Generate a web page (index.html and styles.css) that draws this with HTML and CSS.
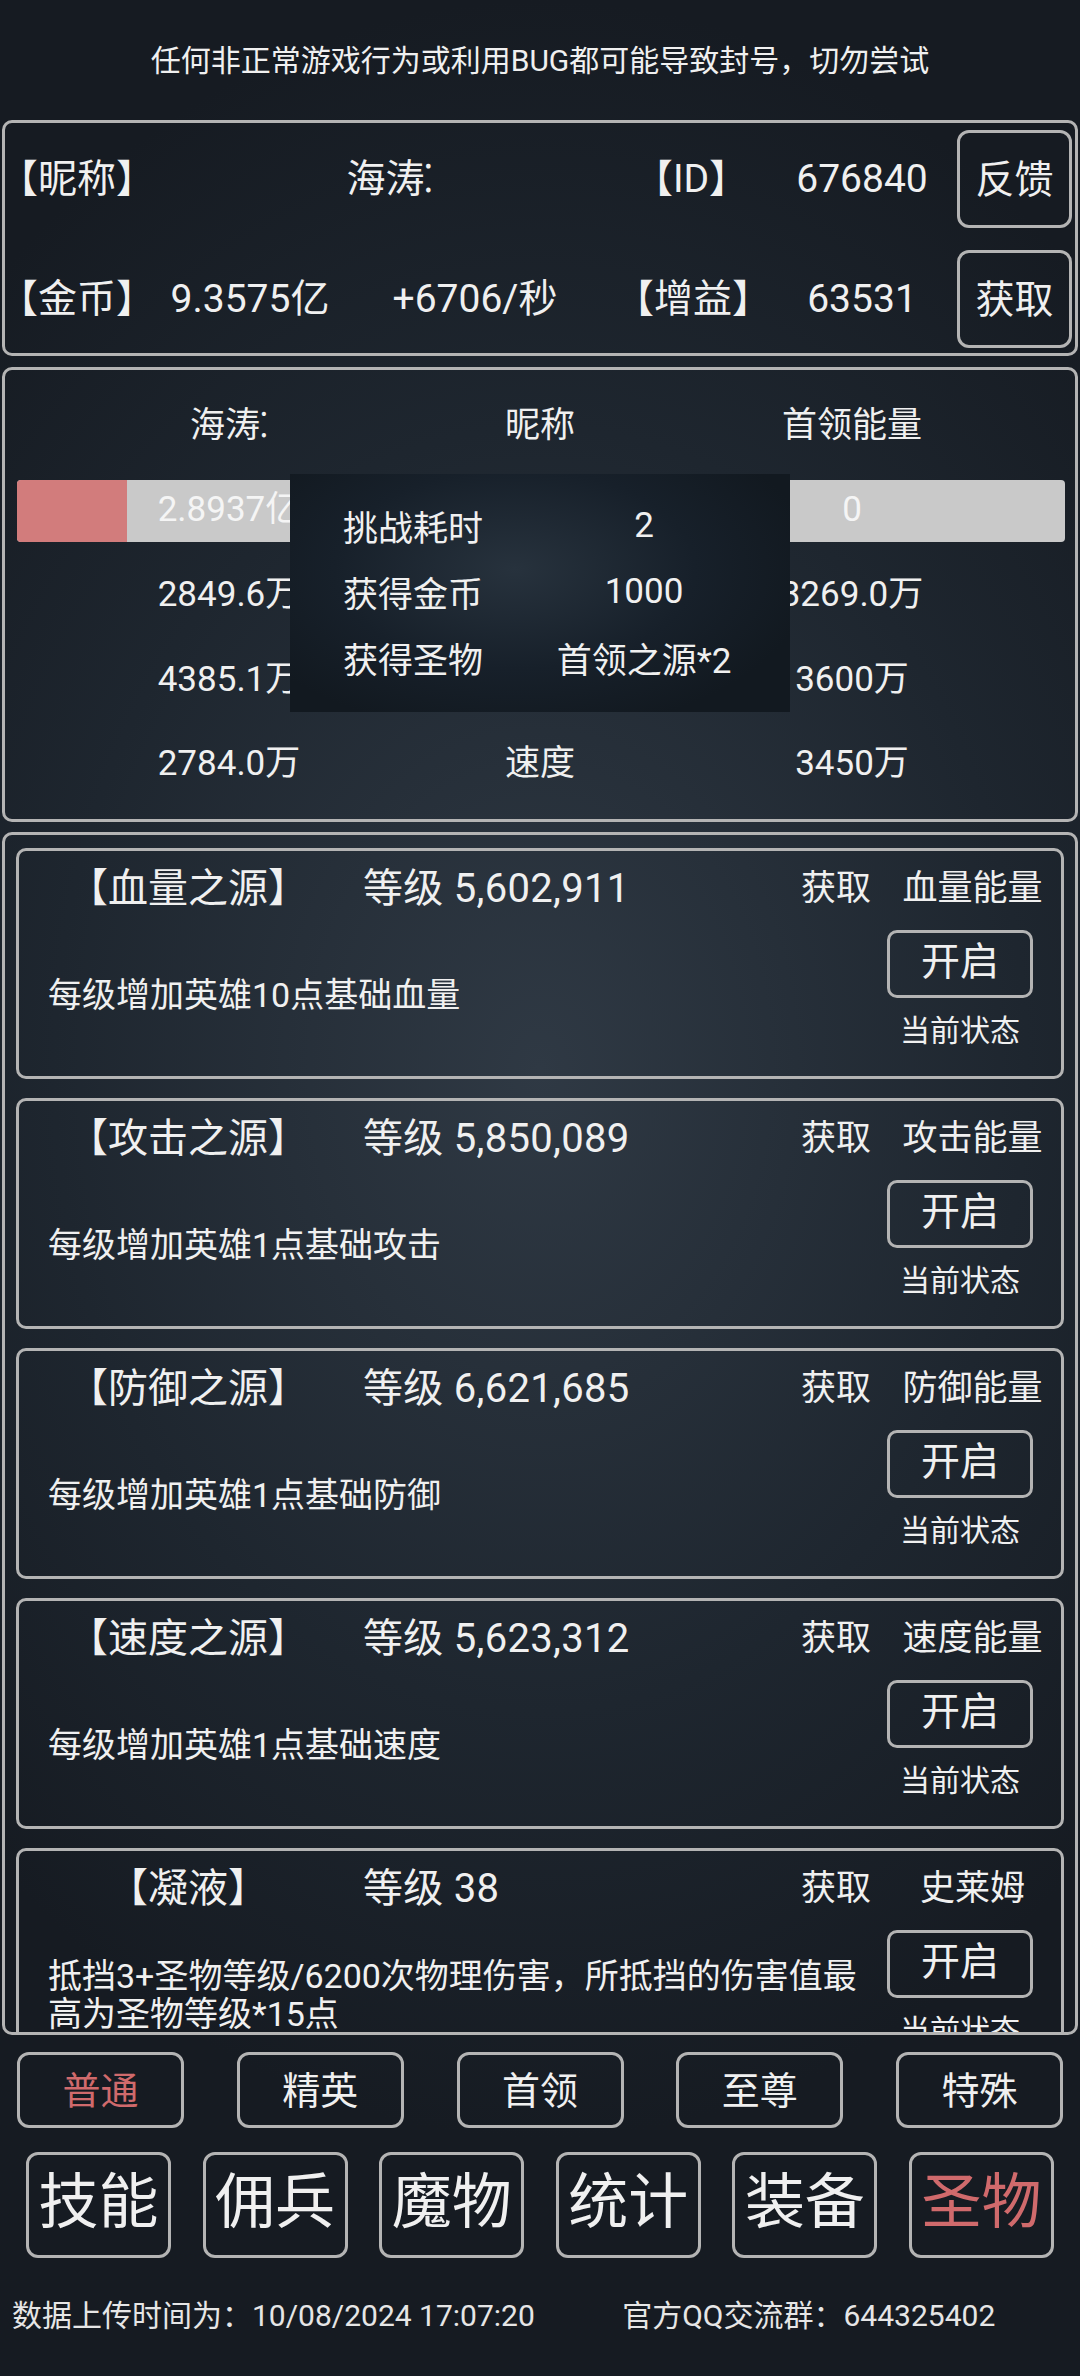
FILE: index.html
```html
<!DOCTYPE html>
<html lang="zh-CN">
<head>
    <meta charset="UTF-8">
    <meta name="viewport" content="width=device-width, initial-scale=1.0">
    <title>圣物</title>
    <link rel="stylesheet" href="styles.css">
</head>
<body>
    <div class="page">
        <p class="notice">任何非正常游戏行为或利用BUG都可能导致封号，切勿尝试</p>

        <section class="panel info">
            <span class="label">【昵称】</span>
            <span class="name">海涛⁚</span>
            <span class="mid">【ID】</span>
            <span class="val">676840</span>
            <button class="btn">反馈</button>

            <span class="label">【金币】</span>
            <span class="gold">9.3575亿</span>
            <span class="rate">+6706/秒</span>
            <span class="mid">【增益】</span>
            <span class="val">63531</span>
            <button class="btn">获取</button>
        </section>

        <section class="panel boss">
            <div class="boss-grid">
                <span>海涛⁚</span><span>昵称</span><span>首领能量</span>

                <div class="bar"><div class="bar-fill" style="width:26%"></div><span class="bar-text">2.8937亿</span></div>
                <span></span>
                <div class="bar"><div class="bar-fill" style="width:0%"></div><span class="bar-text">0</span></div>

                <span>2849.6万</span><span></span><span>3269.0万</span>
                <span>4385.1万</span><span></span><span>3600万</span>
                <span>2784.0万</span><span>速度</span><span>3450万</span>
            </div>

            <div class="result">
                <span>挑战耗时</span><span>2</span>
                <span>获得金币</span><span>1000</span>
                <span>获得圣物</span><span>首领之源*2</span>
            </div>
        </section>

        <section class="panel relics">
            <div class="relic">
                <div class="relic-head">
                    <span class="r-title">【血量之源】</span>
                    <span class="r-level">等级 5,602,911</span>
                    <span class="r-get">获取</span>
                    <span class="r-energy">血量能量</span>
                </div>
                <div class="relic-body">
                    <p class="r-desc">每级增加英雄10点基础血量</p>
                    <div class="r-side">
                        <button class="r-btn">开启</button>
                        <span class="r-state">当前状态</span>
                    </div>
                </div>
            </div>

            <div class="relic">
                <div class="relic-head">
                    <span class="r-title">【攻击之源】</span>
                    <span class="r-level">等级 5,850,089</span>
                    <span class="r-get">获取</span>
                    <span class="r-energy">攻击能量</span>
                </div>
                <div class="relic-body">
                    <p class="r-desc">每级增加英雄1点基础攻击</p>
                    <div class="r-side">
                        <button class="r-btn">开启</button>
                        <span class="r-state">当前状态</span>
                    </div>
                </div>
            </div>

            <div class="relic">
                <div class="relic-head">
                    <span class="r-title">【防御之源】</span>
                    <span class="r-level">等级 6,621,685</span>
                    <span class="r-get">获取</span>
                    <span class="r-energy">防御能量</span>
                </div>
                <div class="relic-body">
                    <p class="r-desc">每级增加英雄1点基础防御</p>
                    <div class="r-side">
                        <button class="r-btn">开启</button>
                        <span class="r-state">当前状态</span>
                    </div>
                </div>
            </div>

            <div class="relic">
                <div class="relic-head">
                    <span class="r-title">【速度之源】</span>
                    <span class="r-level">等级 5,623,312</span>
                    <span class="r-get">获取</span>
                    <span class="r-energy">速度能量</span>
                </div>
                <div class="relic-body">
                    <p class="r-desc">每级增加英雄1点基础速度</p>
                    <div class="r-side">
                        <button class="r-btn">开启</button>
                        <span class="r-state">当前状态</span>
                    </div>
                </div>
            </div>

            <div class="relic">
                <div class="relic-head">
                    <span class="r-title">【凝液】</span>
                    <span class="r-level">等级 38</span>
                    <span class="r-get">获取</span>
                    <span class="r-energy">史莱姆</span>
                </div>
                <div class="relic-body">
                    <p class="r-desc">抵挡3+圣物等级/6200次物理伤害，所抵挡的伤害值最高为圣物等级*15点</p>
                    <div class="r-side">
                        <button class="r-btn">开启</button>
                        <span class="r-state">当前状态</span>
                    </div>
                </div>
            </div>
        </section>

        <div class="tabs">
            <button class="tab active">普通</button>
            <button class="tab">精英</button>
            <button class="tab">首领</button>
            <button class="tab">至尊</button>
            <button class="tab">特殊</button>
        </div>

        <nav class="nav">
            <button class="nav-btn">技能</button>
            <button class="nav-btn">佣兵</button>
            <button class="nav-btn">魔物</button>
            <button class="nav-btn">统计</button>
            <button class="nav-btn">装备</button>
            <button class="nav-btn active">圣物</button>
        </nav>

        <footer class="footer">
            <span>数据上传时间为：10/08/2024 17:07:20</span>
            <span class="qq">官方QQ交流群：644325402</span>
        </footer>
    </div>
</body>
</html>
```

FILE: styles.css
```css
html, body {
    margin: 0;
    padding: 0;
}
body {
    width: 1080px;
    height: 2376px;
    overflow: hidden;
    font-family: Roboto, "Noto Sans CJK SC", sans-serif;
    color: #f0f0f0;
    background: radial-gradient(ellipse 75% 45% at 50% 45%, #2f3944 0%, #1e262f 60%, #161b22 100%);
}
button {
    font-family: inherit;
    color: inherit;
    background: transparent;
    padding: 0;
    cursor: pointer;
}
.page {
    padding: 0 2px;
}
.notice {
    margin: 0;
    height: 120px;
    box-sizing: border-box;
    padding-bottom: 5px;
    display: flex;
    align-items: center;
    justify-content: center;
    font-size: 30px;
}
.panel {
    border: 3px solid #b4b4b4;
    border-radius: 10px;
}

/* player info */
.info {
    display: grid;
    grid-template-columns: 157px 170px 280px 152px 190px 115px;
    grid-auto-rows: 98px;
    row-gap: 22px;
    align-items: center;
    padding: 7px 3px 5px 3px;
    font-size: 39px;
    line-height: 48px;
}
.info .label {
    margin-left: -9px;
}
.info .name {
    grid-column: span 2;
    text-align: center;
}
.info .gold,
.info .rate,
.info .mid,
.info .val {
    text-align: center;
}
.btn {
    height: 98px;
    padding-bottom: 6px;
    border: 3px solid #b4b4b4;
    border-radius: 12px;
    font-size: 39px;
}

/* boss fight */
.boss {
    position: relative;
    margin-top: 11px;
    padding: 14px 10px 12px 12px;
}
.boss-grid {
    display: grid;
    grid-template-columns: 424px 198px 426px;
    grid-auto-rows: 84.5px;
    align-items: center;
    text-align: center;
    font-size: 35px;
    line-height: 44px;
}
.bar {
    position: relative;
    height: 62px;
    background: #c9c9c9;
    border-radius: 4px;
    overflow: hidden;
}
.bar-fill {
    height: 100%;
    background: #d27c7c;
}
.bar-text {
    position: absolute;
    left: 0;
    right: 0;
    top: 8px;
    color: #f5f5f5;
}
.result {
    position: absolute;
    left: 285px;
    top: 104px;
    width: 500px;
    height: 238px;
    box-sizing: border-box;
    padding-top: 18px;
    display: grid;
    grid-template-columns: 246px 216px;
    grid-auto-rows: 66px;
    align-items: center;
    text-align: center;
    font-size: 35px;
    background: radial-gradient(ellipse 60% 70% at 45% 40%, #27323d 0%, #17202a 60%, #121920 100%);
}

/* relic list */
.relics {
    margin-top: 10px;
    height: 1203px;
    box-sizing: border-box;
    padding: 13px 11px 0;
    overflow: hidden;
    display: flex;
    flex-direction: column;
    gap: 19px;
}
.relic {
    flex: none;
    height: 231px;
    box-sizing: border-box;
    border: 3px solid #b4b4b4;
    border-radius: 10px;
    display: flex;
    flex-direction: column;
}
.relic-head {
    height: 76px;
    display: flex;
    align-items: center;
    line-height: 48px;
}
.r-title {
    width: 316px;
    margin-left: 11px;
    text-align: center;
    font-size: 40px;
}
.r-level {
    flex: 1;
    margin-left: 17px;
    font-size: 40px;
    letter-spacing: 0.3px;
}
.r-get {
    width: 70px;
    text-align: center;
    font-size: 35px;
}
.r-energy {
    width: 145px;
    margin: 0 16px 0 29px;
    text-align: center;
    font-size: 35px;
}
.relic-body {
    flex: 1;
    display: flex;
}
.r-desc {
    flex: 1;
    align-self: center;
    margin: 0 20px 0 29px;
    padding-bottom: 12px;
    font-size: 34px;
    line-height: 38px;
}
.r-side {
    width: 146px;
    margin-right: 28px;
    display: flex;
    flex-direction: column;
    align-items: center;
}
.r-btn {
    width: 146px;
    height: 68px;
    margin-top: 3px;
    padding-bottom: 4px;
    border: 3px solid #b4b4b4;
    border-radius: 10px;
    font-size: 39px;
    line-height: 56px;
}
.r-state {
    margin-top: 15px;
    font-size: 30px;
    line-height: 36px;
}

/* difficulty tabs */
.tabs {
    margin-top: 17px;
    padding: 0 15px;
    display: flex;
    justify-content: space-between;
}
.tab {
    width: 167px;
    height: 76px;
    padding-bottom: 4px;
    border: 3px solid #b4b4b4;
    border-radius: 12px;
    font-size: 38px;
}
.active {
    color: #d06a6c;
}

/* bottom navigation */
.nav {
    margin-top: 24px;
    padding: 0 24px;
    display: flex;
    justify-content: space-between;
}
.nav-btn {
    width: 145px;
    height: 106px;
    padding-bottom: 4px;
    border: 3px solid #b4b4b4;
    border-radius: 12px;
    font-size: 60px;
    line-height: 90px;
}

.footer {
    margin-top: 38px;
    padding-left: 10px;
    font-size: 30px;
    line-height: 40px;
    color: #e6e6e6;
}
.footer .qq {
    margin-left: 80px;
}
```
